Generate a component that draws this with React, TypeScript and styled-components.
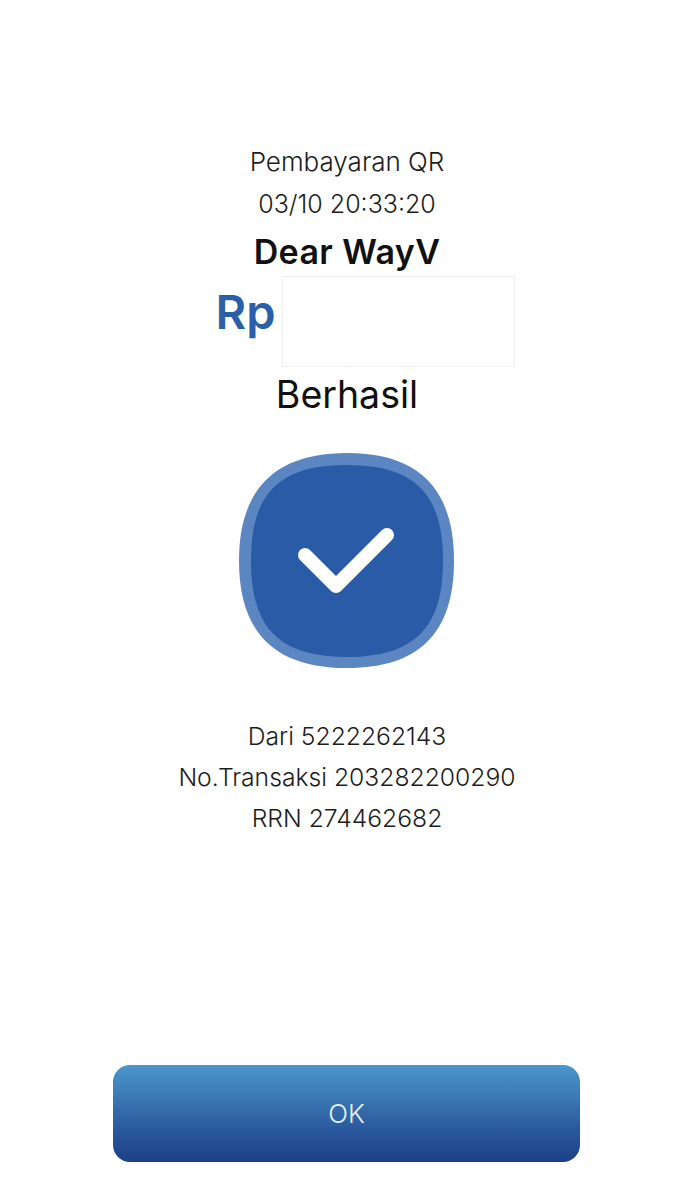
import React from "react";
import styled, { createGlobalStyle } from "styled-components";

const Global = createGlobalStyle`
  html, body { margin: 0; padding: 0; background: #fff; }
  body { font-family: Inter, "Liberation Sans", sans-serif; color: #1c1c1c; }
`;

const Page = styled.main`
  width: 694px;
  height: 1200px;
  padding-top: 141px;
  box-sizing: border-box;
  display: flex;
  flex-direction: column;
  align-items: center;
  background: #fff;
`;

const InfoLine = styled.div<{ $size: number }>`
  height: 42px;
  line-height: 42px;
  font-size: ${(p) => p.$size}px;
  font-weight: 300;
  text-align: center;
  white-space: nowrap;
`;

const Merchant = styled.h1`
  margin: 4px 0 0;
  height: 46px;
  line-height: 46px;
  font-size: 34px;
  letter-spacing: 0.4px;
  font-weight: 600;
  color: #111;
  white-space: nowrap;
`;

const AmountRow = styled.div`
  margin-top: 1px;
  padding-left: 36px;
  display: flex;
  align-items: flex-start;
  gap: 6px;
`;

const Currency = styled.span`
  font-size: 47px;
  font-weight: 600;
  line-height: 71px;
  color: #2b5fa8;
`;

const HiddenAmount = styled.div`
  width: 233px;
  height: 91px;
  box-sizing: border-box;
  border: 1px solid #efeff2;
`;

const Status = styled.div`
  height: 55px;
  line-height: 55px;
  font-size: 37.5px;
  font-weight: 400;
  color: #111;
`;

const BadgeIcon = styled.svg`
  display: block;
  width: 216px;
  height: 216px;
  margin-top: 31px;
`;

const Details = styled.div`
  margin-top: 47px;
  display: flex;
  flex-direction: column;
  align-items: center;
`;

const DetailLine = styled.div`
  height: 41px;
  line-height: 41px;
  font-size: 24.7px;
  font-weight: 300;
  white-space: nowrap;
`;

const OkButton = styled.button`
  margin-top: 226px;
  margin-right: 1px;
  width: 467px;
  height: 97px;
  border: 0;
  border-radius: 17px;
  background: linear-gradient(180deg, #4a96cd 0%, #3a77b3 35%, #2a5a9e 65%, #1d3f87 100%);
  color: #e6f2fa;
  font-family: Inter, "Liberation Sans", sans-serif;
  font-size: 26px;
  font-weight: 300;
`;

export default function App() {
  return (
    <Page>
      <Global />
      <InfoLine $size={26}>Pembayaran QR</InfoLine>
      <InfoLine $size={25}>03/10 20:33:20</InfoLine>
      <Merchant>Dear WayV</Merchant>
      <AmountRow>
        <Currency>Rp</Currency>
        <HiddenAmount />
      </AmountRow>
      <Status>Berhasil</Status>
      <BadgeIcon viewBox="0 0 216 216" aria-hidden="true">
        <path
          fill="#5b86c1"
          d="M108 0C180 0 215 36 215 108C215 180 180 215 108 215C36 215 0 180 0 108C0 36 36 0 108 0Z"
        />
        <path
          fill="#2a5ba6"
          d="M108 12C175 12 204 40 204 108C204 175 175 204 108 204C40 204 12 175 12 108C12 40 40 12 108 12Z"
        />
        <path
          fill="none"
          stroke="#fff"
          strokeWidth="14"
          strokeLinecap="round"
          strokeLinejoin="round"
          d="M66 102L97 133L148 82"
        />
      </BadgeIcon>
      <Details>
        <DetailLine>Dari 5222262143</DetailLine>
        <DetailLine>No.Transaksi 203282200290</DetailLine>
        <DetailLine>RRN 274462682</DetailLine>
      </Details>
      <OkButton type="button">OK</OkButton>
    </Page>
  );
}
